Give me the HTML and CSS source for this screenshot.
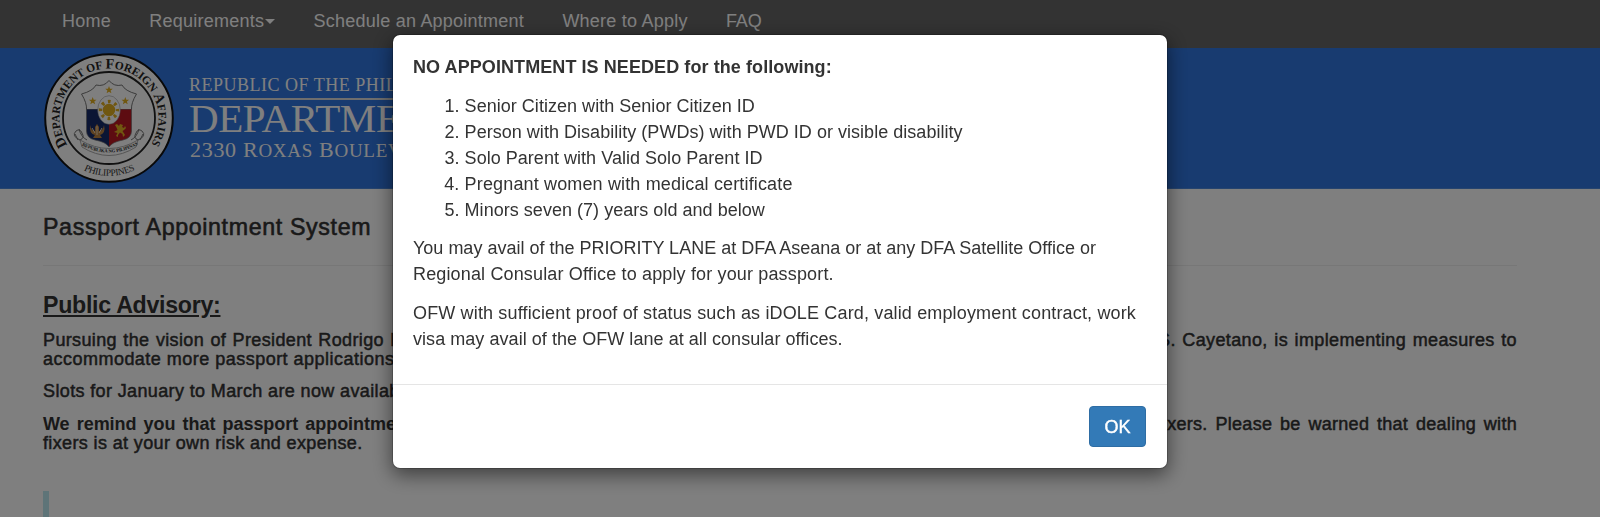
FILE: index.html
```html
<!DOCTYPE html>
<html lang="en">
<head>
    <meta charset="UTF-8">
    <meta name="viewport" content="width=device-width, initial-scale=1.0">
    <title>Passport Appointment System</title>
    <link rel="stylesheet" href="styles.css">
</head>
<body>
    <nav class="navbar">
        <a>Home</a>
        <a>Requirements<span class="caret"></span></a>
        <a>Schedule an Appointment</a>
        <a>Where to Apply</a>
        <a class="nav-faq">FAQ</a>
    </nav>

    <header class="banner">
        <svg class="seal" viewBox="-65 -65 130 130">
            <defs>
                <path id="arcTop" d="M-41.5 27 A49.5 49.5 0 1 1 41.5 27"/>
                <path id="arcBottom" d="M-37 44.5 A57.8 57.8 0 0 0 37 44.5"/>
                <path id="arcRibbon" d="M-30 26 Q0 43 30 26"/>
                <path id="star" d="M0 -4 L1 -1.3 L3.8 -1.2 L1.6 .5 L2.4 3.3 L0 1.7 L-2.4 3.3 L-1.6 .5 L-3.8 -1.2 L-1 -1.3Z"/>
                <clipPath id="shieldClip"><path d="M-22.5 -8.5 H22.5 V13 Q22.5 20 14 22 Q3 24 0 29 Q-3 24 -14 22 Q-22.5 20 -22.5 13Z"/></clipPath>
            </defs>
            <circle r="63.8" fill="#fff" stroke="#111" stroke-width="2"/>
            <circle r="46" fill="#fff" stroke="#222" stroke-width="1.8"/>
            <text class="seal-text"><textPath href="#arcTop" textLength="211" lengthAdjust="spacingAndGlyphs"><tspan class="big">D</tspan>EPARTMENT OF <tspan class="big">F</tspan>OREIGN <tspan class="big">A</tspan>FFAIRS</textPath></text>
            <text class="seal-country"><textPath href="#arcBottom" startOffset="14" textLength="53">PHILIPPINES</textPath></text>
            <path d="M0 -37.5 Q-5 -31 -13 -33 Q-16 -27 -27.5 -24 Q-22 -15 -22.5 -8.5 H22.5 Q22 -15 27.5 -24 Q16 -27 13 -33 Q5 -31 0 -37.5Z" fill="#fff" stroke="#777" stroke-width="1"/>
            <g clip-path="url(#shieldClip)">
                <rect x="-23" y="-9" width="23" height="40" fill="#172a69"/>
                <rect y="-9" width="23" height="40" fill="#ba1823"/>
            </g>
            <path d="M-22.5 -8.5 V13 Q-22.5 20 -14 22 Q-3 24 0 29 Q3 24 14 22 Q22.5 20 22.5 13 V-8.5" fill="none" stroke="#777" stroke-width=".7"/>
            <ellipse cy="-8" rx="11.3" ry="14.3" fill="#fff" stroke="#888" stroke-width=".5"/>
            <g fill="#e1ae20">
                <circle cy="-8" r="6.2"/>
                <circle cy="-8" r="8.5" fill="none" stroke="#e1ae20" stroke-width="3.4" stroke-dasharray="2.7 3.976" stroke-dashoffset="1.35"/>
                <use href="#star" y="-28"/>
                <use href="#star" x="-16.3" y="-17"/>
                <use href="#star" x="16.3" y="-17"/>
                <!-- lion -->
                <path d="M6 7 L8 6 L10 8 L11 6 L14 7 L13 9 L15 10 L16 8 L17 10 L15 12 L13.5 13 L16 17 L14 19 L13.5 16 L11 14.5 L9 17 L9 19 L7 18 L8.5 15 L5 14 L8.5 12 L7.5 9.5Z"/>
            </g>
            <!-- eagle -->
            <path d="M-19 7 Q-18 13 -14 13 L-14 9 L-12 6 L-10 9 L-10 13 Q-6 13 -5 7 Q-3 15 -9 17 L-7 20 H-16 L-14 17 Q-20 16 -19 7Z" fill="#bd8341"/>
            <path d="M-12 8 V17 M-17 10 L-14 15 M-7 10 L-10 15" stroke="#e7d4b8" stroke-width="1" fill="none"/>
            <!-- ribbon -->
            <g fill="none" stroke="#777" stroke-width="1">
                <path d="M-29 22 Q0 39 29 22 L27 29 Q0 46 -27 29Z" fill="#fff" stroke="#aaa"/>
                <path d="M-29 22 Q-38 18 -33 13 Q-29 10 -27 15 Q-24 20 -29 22 M-30 11 Q-28 19 -22 22 M-34 16 L-31 22"/>
                <path d="M29 22 Q38 18 33 13 Q29 10 27 15 Q24 20 29 22 M30 11 Q28 19 22 22 M34 16 L31 22"/>
            </g>
            <text class="seal-ribbon"><textPath href="#arcRibbon" startOffset="3" textLength="59">REPUBLIKA NG PILIPINAS</textPath></text>
        </svg>
        <div class="banner-text">
            <div class="republic">REPUBLIC OF THE PHIL</div>
            <div class="department">DEPARTME</div>
            <div class="address">2330 R<small>OXAS</small> B<small>OULEV</small></div>
        </div>
    </header>

    <main class="container">
        <h4 class="page-title">Passport Appointment System</h4>
        <h4 class="advisory-title">Public Advisory:</h4>
        <div class="advisory">
            <div class="line"><span class="first">Pursuing the vision of President Rodrigo R</span><span class="first-end">S. Cayetano, is implementing measures to</span></div>
            <div class="line"><span class="second">accommodate more passport applications</span></div>
        </div>
        <div class="advisory">
            <div class="line"><span>Slots for January to March are now availab</span></div>
        </div>
        <div class="advisory">
            <div class="line"><b class="remind">We remind you that passport appointme</b><span class="remind-end">xers. Please be warned that dealing with</span></div>
            <div class="line"><span>fixers is at your own risk and expense.</span></div>
        </div>
        <div class="callout"></div>
    </main>

    <div class="backdrop">
        <div class="modal">
            <div class="modal-body">
                <p class="notice"><b>NO APPOINTMENT IS NEEDED for the following:</b></p>
                <ol>
                    <li>Senior Citizen with Senior Citizen ID</li>
                    <li>Person with Disability (PWDs) with PWD ID or visible disability</li>
                    <li>Solo Parent with Valid Solo Parent ID</li>
                    <li class="wide">Pregnant women with medical certificate</li>
                    <li>Minors seven (7) years old and below</li>
                </ol>
                <p>You may avail of the PRIORITY LANE at DFA Aseana or at any DFA Satellite Office or<br><span class="wide">Regional Consular Office to apply for your passport.</span></p>
                <p><span class="wide">OFW with sufficient proof of status such as iDOLE Card, valid employment contract, work</span><br><span class="snug">visa may avail of the OFW lane at all consular offices.</span></p>
            </div>
            <div class="modal-footer">
                <button class="btn">OK</button>
            </div>
        </div>
    </div>
</body>
</html>
```
FILE: styles.css
```css
* {
    box-sizing: border-box;
}
body {
    margin: 0;
    height: 517px;
    overflow: hidden;
    background: #fff;
    color: #333;
    font-family: "Liberation Sans", Arial, sans-serif;
    font-size: 18px;
    line-height: 25.86px;
}
.navbar {
    display: flex;
    gap: 38.4px;
    height: 48px;
    padding: 9px 0 0 62px;
    background: #666;
    color: #fff;
    letter-spacing: 0.23px;
    white-space: nowrap;
}
.nav-faq {
    letter-spacing: -0.2px;
}
.caret {
    display: inline-block;
    margin-left: 1px;
    vertical-align: 3px;
    border-top: 5px solid #fff;
    border-left: 5px solid transparent;
    border-right: 5px solid transparent;
}
.banner {
    display: flex;
    height: 141px;
    padding: 5px 0 0 44px;
    background: #3076e0;
    border-bottom: 1px solid #4c88dc;
    color: #fff;
    font-family: "Liberation Serif", "Times New Roman", serif;
}
.seal {
    width: 130px;
    height: 130px;
    flex: none;
}
.seal-text {
    font-size: 11.5px;
    font-weight: bold;
    fill: #222;
}
.seal-text .big {
    font-size: 14.5px;
}
.seal-country {
    font-size: 9.5px;
    fill: #333;
}
.seal-ribbon {
    font-size: 4.6px;
    font-weight: bold;
    fill: #222;
}
.banner-text {
    width: 230px;
    padding: 20px 0 0 15px;
    white-space: nowrap;
}
.republic {
    height: 27px;
    line-height: 24px;
    font-size: 18px;
    letter-spacing: 0.5px;
    border-bottom: 2px solid #ddd;
}
.department {
    height: 38px;
    font-size: 41px;
    line-height: 36px;
    letter-spacing: -0.4px;
}
.address {
    padding-left: 1px;
    font-size: 22px;
    line-height: 24px;
    letter-spacing: 0.7px;
}
.address small {
    font-size: 19px;
}
.container {
    width: 1474px;
    margin-left: 43px;
}
h4 {
    margin: 0;
    font-size: 23.2px;
    line-height: 25.5px;
}
.page-title {
    height: 77px;
    padding-top: 26px;
    font-weight: normal;
    letter-spacing: 0.65px;
    -webkit-text-stroke: 0.6px #333;
    border-bottom: 1px solid #eee;
}
.advisory-title {
    padding-top: 27px;
    margin-bottom: 12px;
    letter-spacing: -0.29px;
    text-decoration: underline;
}
.advisory {
    margin-bottom: 12.9px;
    line-height: 19.4px;
    letter-spacing: 0.37px;
    -webkit-text-stroke: 0.5px #333;
}
.line {
    display: flex;
    justify-content: space-between;
    white-space: nowrap;
}
.first {
    word-spacing: 1px;
}
.first-end {
    word-spacing: 1.2px;
}
.second {
    letter-spacing: 0.48px;
}
.remind {
    letter-spacing: -0.05px;
    word-spacing: 2.2px;
    -webkit-text-stroke: 0;
}
.remind-end {
    letter-spacing: 0.29px;
    word-spacing: 2.5px;
}
.callout {
    height: 26px;
    margin-top: 38px;
    border-left: 6px solid #bce8f1;
}
.backdrop {
    position: fixed;
    inset: 0;
    padding-top: 34px;
    background: rgba(0, 0, 0, 0.5);
}
.modal {
    width: 776px;
    height: 435px;
    margin-left: 392px;
    background: #fff;
    background-clip: padding-box;
    border: 1px solid rgba(0, 0, 0, 0.2);
    border-radius: 8px;
    box-shadow: 0 6px 19px rgba(0, 0, 0, 0.5);
}
.modal-body {
    height: 349px;
    padding: 20px;
    white-space: nowrap;
}
.modal-body p {
    margin: 0 0 12.9px;
}
.modal-body .notice {
    margin-bottom: 13.3px;
    letter-spacing: 0.08px;
}
.modal-body ol {
    margin: 0 0 12.9px;
    padding-left: 51.6px;
    letter-spacing: 0.03px;
}
.modal-body .wide {
    letter-spacing: 0.15px;
}
.modal-body .snug {
    letter-spacing: 0.05px;
}
.modal-footer {
    display: flex;
    justify-content: flex-end;
    padding: 21px;
    border-top: 1px solid #e5e5e5;
}
.btn {
    width: 57px;
    height: 41px;
    padding: 1px 0 0;
    background: #337ab7;
    border: 1px solid #2e6da4;
    border-radius: 4px;
    color: #fff;
    font-family: inherit;
    font-size: 18px;
    -webkit-text-stroke: 0.4px #fff;
}
```
